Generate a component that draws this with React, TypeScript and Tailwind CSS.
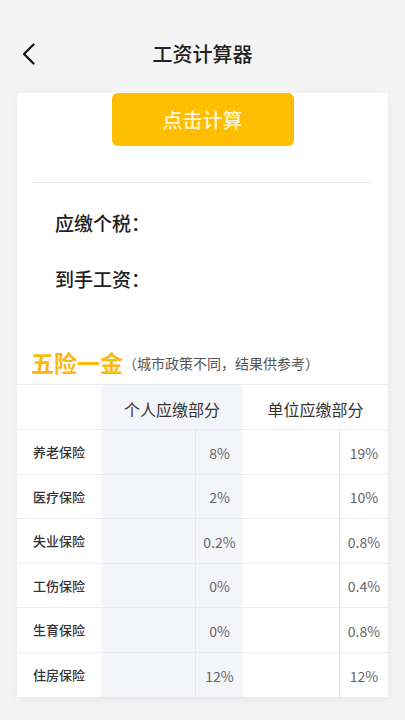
import React from "react";

const rows = [
  ["养老保险", "8%", "19%"],
  ["医疗保险", "2%", "10%"],
  ["失业保险", "0.2%", "0.8%"],
  ["工伤保险", "0%", "0.4%"],
  ["生育保险", "0%", "0.8%"],
  ["住房保险", "12%", "12%"],
];

export default function App() {
  return (
    <div
      className="min-h-[720px] w-full bg-[#f4f4f4]"
      style={{ fontFamily: '"Noto Sans CJK SC", "Noto Sans", sans-serif' }}
    >
      <div className="pt-[30px]">
        <div className="relative flex h-[48px] items-center justify-center">
          <svg
            className="absolute left-[21px] top-[13px]"
            width="16"
            height="22"
            viewBox="0 0 16 22"
            fill="none"
          >
            <path d="M12.5 1.5 L3 11 L12.5 20.5" stroke="#111" strokeWidth="2.2" strokeLinecap="round" strokeLinejoin="round" />
          </svg>
          <span className="text-[20px] font-medium text-[#222]">工资计算器</span>
        </div>
      </div>

      <div className="mx-[17px] mt-[15px] bg-white shadow-[0_3px_8px_rgba(0,0,0,0.06)]">
        <div className="flex justify-center">
          <div className="flex h-[53px] w-[182px] items-center justify-center rounded-[6px] bg-[#ffbd00] text-[20px] font-medium text-[#fff4d6]">
            点击计算
          </div>
        </div>
        <div className="mx-[16px] mt-[36px] h-px bg-[#e6e6e6]" />
        <div className="pt-[12px]">
          <div className="flex h-[56px] items-center pl-[38px] text-[19px] font-medium text-[#222]">应缴个税：</div>
          <div className="flex h-[56px] items-center pl-[38px] text-[19px] font-medium text-[#222]">到手工资：</div>
        </div>
        <div className="mt-[39px] mb-[6px] flex h-[32px] items-center pl-[14px]">
          <span className="text-[23px] font-bold text-[#fbb80f]">五险一金</span>
          <span className="pt-[2px] text-[14px] text-[#555]">（城市政策不同，结果供参考）</span>
        </div>
        <div className="border-t border-[#ececef]">
          <div className="grid h-[45px] grid-cols-[84px_142px_145px] border-b border-[#ececef]">
            <div />
            <div className="flex items-center justify-center bg-[#f4f5f9] pt-[4px] text-[16px] text-[#333]">个人应缴部分</div>
            <div className="flex items-center justify-center pt-[4px] text-[16px] text-[#333]">单位应缴部分</div>
          </div>
          {rows.map(([name, a, b], i) => (
            <div
              key={name}
              className={
                "grid h-[44.5px] grid-cols-[84px_95px_47px_97px_48px] " +
                (i < rows.length - 1 ? "border-b border-[#ececef]" : "")
              }
            >
              <div className="flex items-center justify-center text-[13px] font-medium text-[#333]">{name}</div>
              <div className="bg-[#f4f5f9] border-r border-[#e6e6ea]" />
              <div className="flex items-center justify-center bg-[#f4f5f9] pt-[3px] text-[14px] text-[#666]">{a}</div>
              <div className="border-r border-[#e6e6ea]" />
              <div className="flex items-center justify-center pt-[3px] text-[14px] text-[#666]">{b}</div>
            </div>
          ))}
        </div>
      </div>
    </div>
  );
}
